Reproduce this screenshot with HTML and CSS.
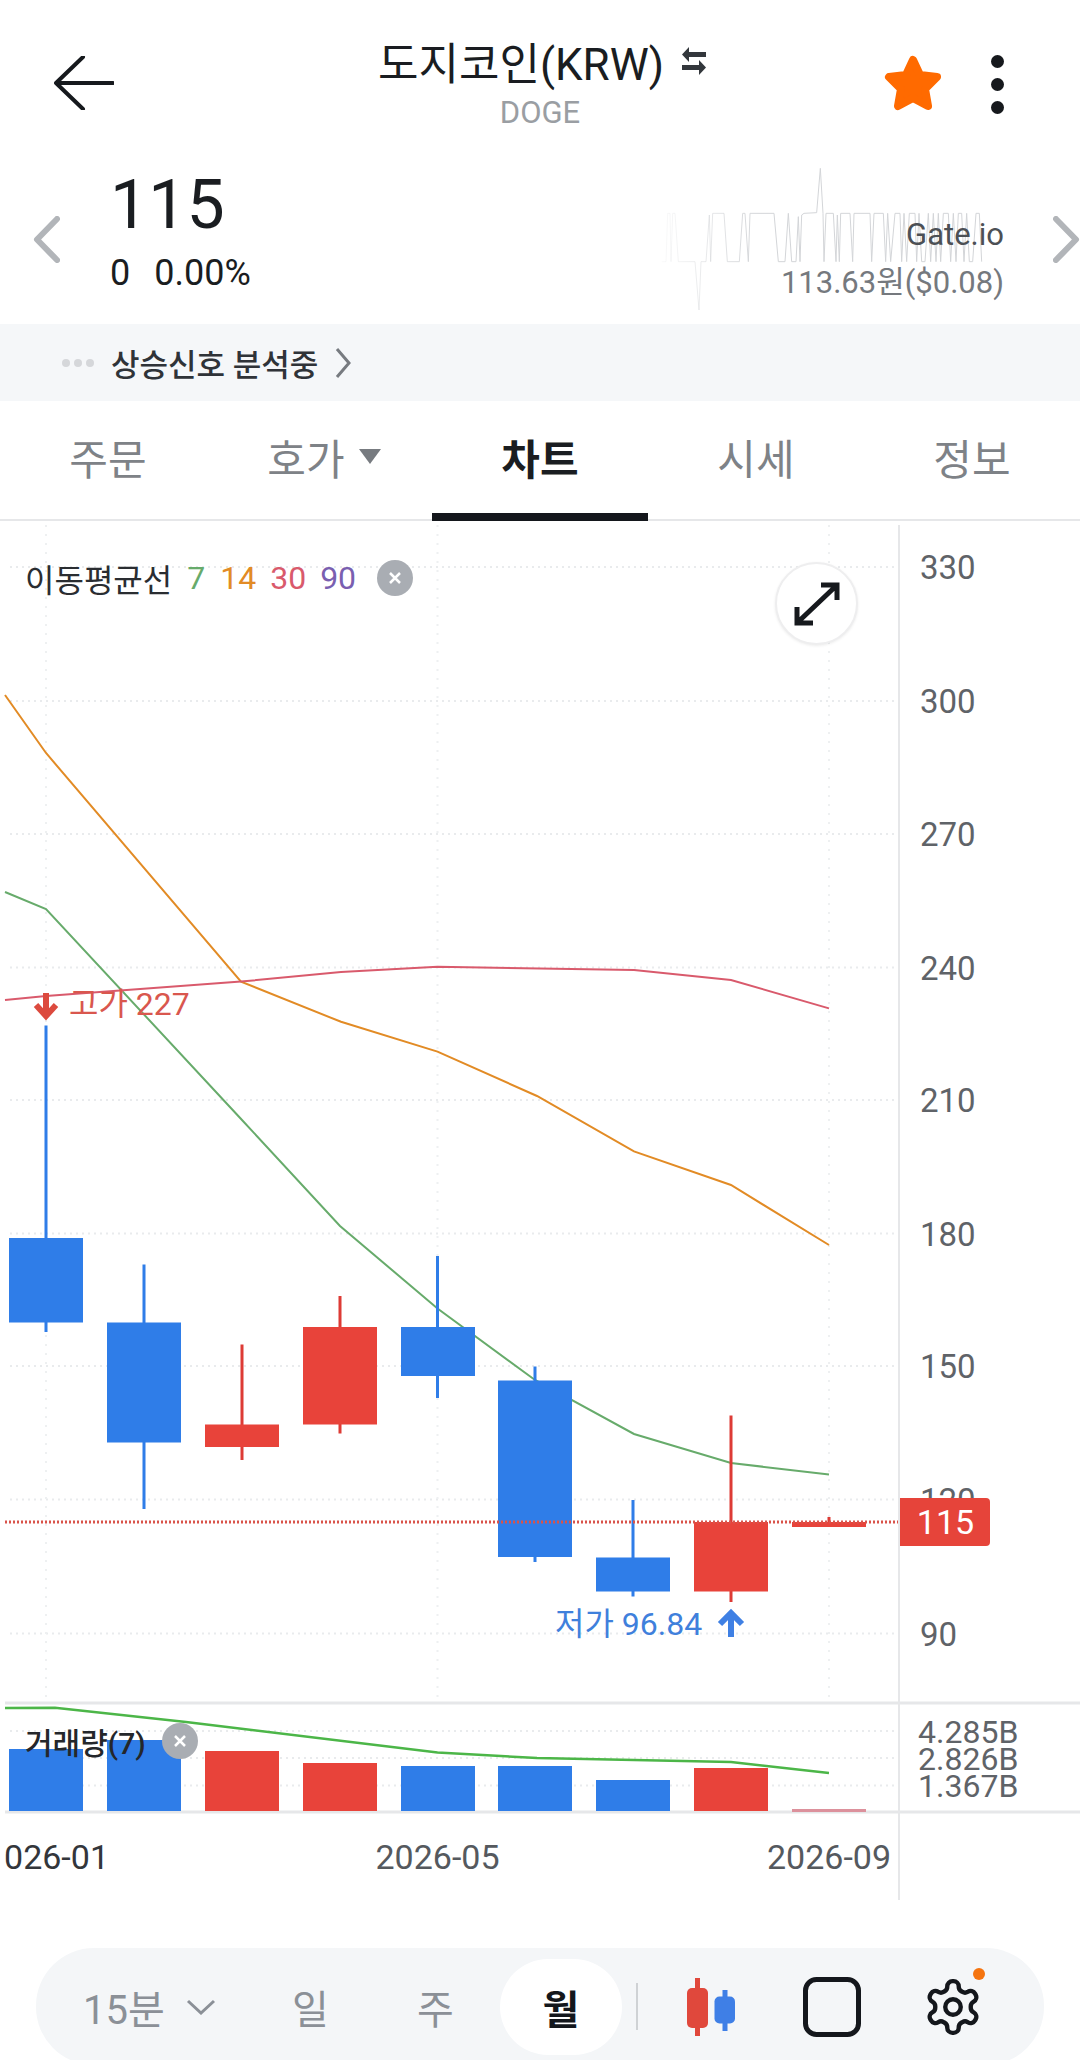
FILE: index.html
```html
<!DOCTYPE html>
<html lang="ko">
<head>
  <meta charset="UTF-8">
  <title>도지코인(KRW) 차트</title>
  <link rel="stylesheet" href="styles.css">
</head>
<body>
  <header class="header">
    <svg class="back" width="60" height="54" viewBox="0 0 60 54"><path d="M29 1 2 27l27 26M2 27h57"/></svg>
    <div class="title-box">
      <div class="title">
        <span>도지코인(KRW)</span>
        <svg class="swap" width="28" height="32" viewBox="0 0 28 32"><path d="M9 2 2 9.500 9 17V12h17V7H9zM19 15l7 7.500-7 7.500v-5H2v-5h17z"/></svg>
      </div>
      <div class="symbol">DOGE</div>
    </div>
    <svg class="star" width="60" height="56" viewBox="0 0 60 56"><path d="M30 5 37 20 54 22 42 34 45 51 30 43 15 51 18 34 6 22 23 20z"/></svg>
    <div class="kebab"><i></i><i></i><i></i></div>
  </header>

  <section class="quote">
    <svg class="spark" width="460" height="180" viewBox="0 0 1380 540">
      <defs>
        <linearGradient id="fade" gradientUnits="userSpaceOnUse" x1="120" y1="0" x2="420" y2="0">
          <stop offset="0" stop-color="#d3d5d8" stop-opacity="0.1"/>
          <stop offset="1" stop-color="#d3d5d8"/>
        </linearGradient>
      </defs>
      <polyline stroke="url(#fade)" points="125,335 138,335 143,190 150,190 153,335 158,190 165,190 175,335 225,335 237,480 243,335 258,335 268,195 272,335 278,190 312,190 322,335 358,335 368,190 375,190 385,335 390,190 462,190 475,335 495,335 505,190 515,335 528,335 535,200 540,335 545,195 552,190 590,188 601,55 609,190 612,335 618,190 640,190 648,335 652,195 658,335 662,190 690,190 698,335 702,190 750,190 755,335 762,190 790,190 797,335 803,190 812,335 825,190 840,190 845,335 852,190 860,335 868,190 885,190 890,335 897,190 905,335 915,335 925,190 932,335 940,190 948,335 955,190 962,335 970,190 985,190 992,335 1000,190 1008,335 1015,190 1025,190 1032,335 1040,190 1048,335 1058,335 1068,190 1078,190 1085,335"/>
    </svg>
    <svg class="nav-chevron" width="27" height="47" viewBox="0 0 27 47"><path d="M24 3 4 23.500 24 44"/></svg>
    <div class="price-box">
      <div class="price">115</div>
      <div class="change"><span>0</span><span>0.00%</span></div>
    </div>
    <div class="source">
      <div class="source-name">Gate.io</div>
      <div class="source-price">113.63원($0.08)</div>
    </div>
    <svg class="nav-chevron next" width="27" height="47" viewBox="0 0 27 47"><path d="M3 3 23 23.500 3 44"/></svg>
  </section>

  <div class="signal">
    <div class="signal-dots"><i></i><i></i><i></i></div>
    <span>상승신호 분석중</span>
    <svg width="16" height="30" viewBox="0 0 16 30"><path d="M2 1 14 15 2 29"/></svg>
  </div>

  <nav class="tabs">
    <a>주문</a>
    <a>호가<i class="caret"></i></a>
    <a class="active">차트</a>
    <a>시세</a>
    <a>정보</a>
  </nav>

  <main class="chart">
    <svg class="plot" width="1080" height="1379" viewBox="0 521 1080 1379">
      <!-- grid -->
      <g class="grid">
        <path d="M10 567H897M10 701H897M10 834H897M10 967.500H897M10 1100H897M10 1233.500H897M10 1366H897M10 1499.500H897M10 1633.500H897"/>
        <path d="M10 1731H897M10 1758H897M10 1785.500H897"/>
      </g>
      <path class="grid-v" d="M46 525V1700M437.500 525V1700M829 525V1700"/>

      <!-- moving averages -->
      <polyline class="ma ma7" points="5,892 46,909 242,1120 340,1226 437.500,1308.500 535,1380 634,1434 731,1463 829,1474.500"/>
      <polyline class="ma ma14" points="5,695 46,753 241,981.600 341,1021.800 437.500,1051.600 537,1096 634,1151.400 731,1185 829,1245"/>
      <polyline class="ma ma30" points="5,1000 46,996 241,981.600 341,972 437.500,966.700 634,970 731,980 829,1008.400"/>

      <!-- candles -->
      <g class="fall">
        <path class="wick" d="M46 1025.500V1332M144 1264.500V1509M437.500 1256V1398M535 1366.500V1562M633 1500V1596.500"/>
        <rect x="9" y="1238" width="74" height="84.500"/>
        <rect x="107" y="1322.500" width="74" height="120"/>
        <rect x="401" y="1327" width="74" height="49"/>
        <rect x="498" y="1380.500" width="74" height="176.500"/>
        <rect x="596" y="1557.500" width="74" height="34"/>
      </g>
      <g class="rise">
        <path class="wick" d="M242 1344.500V1460M340 1296V1433.500M731 1415.500V1602M829 1517V1527"/>
        <rect x="205" y="1424.500" width="74" height="22.500"/>
        <rect x="303" y="1327" width="74" height="97.500"/>
        <rect x="694" y="1522" width="74" height="69.500"/>
        <rect x="792" y="1522" width="74" height="5"/>
      </g>

      <path class="last-line" d="M5 1522H900"/>

      <!-- high / low markers -->
      <path class="mark-high" d="M46 993V1015M36 1005l10 11 10-11"/>
      <text class="label label-high" x="69" y="1015">고가 227</text>
      <text class="label label-low" x="555" y="1635">저가 96.84</text>
      <path class="mark-low" d="M731 1637V1613M720 1624l11-11 11 11"/>

      <!-- y axis -->
      <path class="axis" d="M899 525V1900"/>
      <g class="tick">
        <text x="920" y="579">330</text>
        <text x="920" y="713">300</text>
        <text x="920" y="846">270</text>
        <text x="920" y="979.500">240</text>
        <text x="920" y="1112">210</text>
        <text x="920" y="1245.500">180</text>
        <text x="920" y="1378">150</text>
        <text x="920" y="1511.500">120</text>
        <text x="920" y="1645.500">90</text>
      </g>
      <path class="price-tag" d="M900 1498H986a4 4 0 0 1 4 4v40a4 4 0 0 1-4 4H900z"/>
      <text class="price-tag-text" x="945.500" y="1534" text-anchor="middle">115</text>

      <!-- volume -->
      <path class="pane-line" d="M5 1703H1080M5 1812H1080"/>
      <g class="fall">
        <rect x="9" y="1749" width="74" height="62"/>
        <rect x="107" y="1740" width="74" height="71"/>
        <rect x="401" y="1766" width="74" height="45"/>
        <rect x="498" y="1766" width="74" height="45"/>
        <rect x="596" y="1780" width="74" height="31"/>
      </g>
      <g class="rise">
        <rect x="205" y="1751" width="74" height="60"/>
        <rect x="303" y="1763" width="74" height="48"/>
        <rect x="694" y="1768" width="74" height="43"/>
      </g>
      <rect class="vol-flat" x="792" y="1809" width="74" height="3"/>
      <polyline class="vol-ma" points="5,1708 55,1707.700 186,1722 437.500,1752.600 537,1758 731,1762 829,1773"/>
      <g class="tick vol-tick">
        <text x="918" y="1743">4.285B</text>
        <text x="918" y="1770">2.826B</text>
        <text x="918" y="1797">1.367B</text>
      </g>

      <!-- x axis -->
      <text class="date date-first" x="109" y="1869" text-anchor="end">026-01</text>
      <text class="date" x="437.500" y="1869" text-anchor="middle">2026-05</text>
      <text class="date" x="829" y="1869" text-anchor="middle">2026-09</text>
    </svg>

    <div class="legend">
      <span class="legend-name">이동평균선</span>
      <span class="c7">7</span>
      <span class="c14">14</span>
      <span class="c30">30</span>
      <span class="c90">90</span>
      <i class="close"><svg width="14" height="14" viewBox="0 0 14 14"><path d="M2 2 12 12M12 2 2 12"/></svg></i>
    </div>

    <button class="expand">
      <svg width="46" height="44" viewBox="0 0 46 44"><path d="M4 40 42 4M27 3H43V18M3 25V41H19"/></svg>
    </button>

    <div class="vol-legend">
      <span>거래량(7)</span>
      <i class="close"><svg width="14" height="14" viewBox="0 0 14 14"><path d="M2 2 12 12M12 2 2 12"/></svg></i>
    </div>
  </main>

  <footer class="toolbar">
    <div class="period">15분<svg width="30" height="16" viewBox="0 0 30 16"><path d="M2 2 15 14 28 2"/></svg></div>
    <a class="unit">일</a>
    <a class="unit">주</a>
    <a class="unit active">월</a>
    <div class="divider"></div>
    <svg class="tool-candle" width="48" height="58" viewBox="0 0 48 58">
      <path class="r" d="M10.500 0V58"/><rect class="rb" x="0" y="10" width="21" height="40" rx="5"/>
      <path class="b" d="M38 12V53"/><rect class="bb" x="27.500" y="18.500" width="20.500" height="27" rx="5"/>
    </svg>
    <svg class="tool-square" width="58" height="60" viewBox="0 0 58 60"><rect x="2.500" y="2.500" width="53" height="55" rx="11"/></svg>
    <div class="gear-box">
      <svg class="gear" width="62" height="66" viewBox="0 0 24 24"><path d="M12.220 2h-.44a2 2 0 0 0-2 2v.18a2 2 0 0 1-1 1.730l-.43.25a2 2 0 0 1-2 0l-.15-.08a2 2 0 0 0-2.730.73l-.22.38a2 2 0 0 0 .73 2.730l.15.1a2 2 0 0 1 1 1.720v.51a2 2 0 0 1-1 1.740l-.15.09a2 2 0 0 0-.73 2.730l.22.38a2 2 0 0 0 2.730.73l.15-.08a2 2 0 0 1 2 0l.43.25a2 2 0 0 1 1 1.730V20a2 2 0 0 0 2 2h.44a2 2 0 0 0 2-2v-.18a2 2 0 0 1 1-1.730l.43-.25a2 2 0 0 1 2 0l.15.08a2 2 0 0 0 2.730-.73l.22-.39a2 2 0 0 0-.73-2.730l-.15-.08a2 2 0 0 1-1-1.740v-.5a2 2 0 0 1 1-1.740l.15-.09a2 2 0 0 0 .73-2.730l-.22-.38a2 2 0 0 0-2.730-.73l-.15.08a2 2 0 0 1-2 0l-.43-.25a2 2 0 0 1-1-1.730V4a2 2 0 0 0-2-2z"/><circle cx="12" cy="12" r="3"/></svg>
      <i class="gear-dot"></i>
    </div>
  </footer>
</body>
</html>
```

FILE: styles.css
```css
:root {
  --ink: #1a1d21;
  --muted: #7e8287;
  --blue: #2f7de8;
  --red: #e8433a;
  --line: #e6e7e9;
}

* {
  box-sizing: border-box;
}

html, body {
  margin: 0;
  height: 2060px;
  overflow: hidden;
}

body {
  background: #fff;
  color: var(--ink);
  font-family: Roboto, "Noto Sans CJK KR", sans-serif;
}

/* header */
.header {
  display: flex;
  align-items: flex-start;
  height: 140px;
  position: relative;
}

.back {
  margin: 56px 0 0 54px;
  fill: none;
  stroke: #16191d;
  stroke-width: 4;
  stroke-linecap: round;
  stroke-linejoin: round;
}

.title-box {
  position: absolute;
  left: 0;
  right: 0;
  top: 34px;
  text-align: center;
}

.title {
  display: flex;
  justify-content: center;
  align-items: center;
  gap: 16px;
  height: 54px;
  font-size: 44px;
  margin-left: 6px;
}

.swap {
  fill: #33373c;
}

.symbol {
  margin-top: 5px;
  font-size: 31px;
  line-height: 40px;
  color: #9a9ea3;
}

.star {
  margin: 55px 0 0 769px;
  fill: #ff6a00;
  stroke: #ff6a00;
  stroke-width: 8;
  stroke-linejoin: round;
}

.kebab {
  display: flex;
  flex-direction: column;
  gap: 10px;
  margin: 55px 0 0 48px;
}

.kebab i {
  width: 13px;
  height: 13px;
  border-radius: 50%;
  background: #16191d;
}

/* price row */
.quote {
  display: flex;
  align-items: flex-start;
  height: 184px;
  position: relative;
}

.spark {
  position: absolute;
  left: 620px;
  top: 10px;
  fill: none;
  stroke-width: 3;
}

.nav-chevron {
  flex: none;
  margin: 76px 0 0 33px;
  fill: none;
  stroke: #b2b5b9;
  stroke-width: 6;
  stroke-linecap: round;
  stroke-linejoin: round;
}

.nav-chevron.next {
  margin-left: 49px;
}

.price-box {
  margin: 27px 0 0 50px;
}

.price {
  font-size: 68px;
  line-height: 76px;
}

.change {
  display: flex;
  gap: 24px;
  margin-top: 8px;
  font-size: 36px;
  line-height: 44px;
}

.source {
  position: relative;
  margin: 75px 0 0 auto;
  text-align: right;
  font-size: 31px;
  line-height: 40px;
}

.source-name {
  color: #4c5055;
}

.source-price {
  margin-top: 8px;
  color: #75797e;
}

/* signal banner */
.signal {
  display: flex;
  align-items: center;
  height: 77px;
  padding-left: 62px;
  background: #f5f7f9;
  font-size: 31px;
  font-weight: 500;
  color: #2f3338;
}

.signal-dots {
  display: flex;
  gap: 4px;
  margin-right: 17px;
}

.signal-dots i {
  width: 8px;
  height: 8px;
  border-radius: 50%;
  background: #d5d7da;
}

.signal svg {
  margin-left: 17px;
  fill: none;
  stroke: #777b80;
  stroke-width: 3;
}

/* tabs */
.tabs {
  display: flex;
  height: 120px;
  border-bottom: 2px solid var(--line);
}

.tabs a {
  display: flex;
  flex: 1;
  align-items: center;
  justify-content: center;
  gap: 14px;
  padding-bottom: 2px;
  margin-bottom: -2px;
  font-size: 42px;
  color: var(--muted);
  border-bottom: 8px solid transparent;
}

.tabs a.active {
  color: var(--ink);
  font-weight: 700;
  border-bottom-color: #14171c;
}

.caret {
  width: 0;
  height: 0;
  border-left: 11px solid transparent;
  border-right: 11px solid transparent;
  border-top: 15px solid #777b80;
}

/* chart */
.chart {
  position: relative;
  height: 1379px;
}

.plot {
  display: block;
}

.plot text {
  font-family: Roboto, "Noto Sans CJK KR", sans-serif;
}

.grid path {
  fill: none;
  stroke: #e9ebed;
  stroke-width: 2;
  stroke-dasharray: 2 4;
}

.grid-v {
  fill: none;
  stroke: #eef0f1;
  stroke-width: 2;
  stroke-dasharray: 2 7;
}

.ma {
  fill: none;
  stroke-width: 2;
}

.ma7 {
  stroke: #67ab6b;
}

.ma14 {
  stroke: #e28b25;
}

.ma30 {
  stroke: #d95a6c;
}

.fall rect {
  fill: var(--blue);
}

.rise rect {
  fill: var(--red);
}

.wick {
  fill: none;
  stroke-width: 3;
}

.fall .wick {
  stroke: var(--blue);
}

.rise .wick {
  stroke: #dd3b35;
}

.last-line {
  fill: none;
  stroke: #d9534a;
  stroke-width: 3;
  stroke-dasharray: 2 2;
}

.label {
  font-size: 32px;
}

.label-high {
  fill: #d9574e;
}

.label-low {
  fill: #3f80dc;
}

.mark-high, .mark-low {
  fill: none;
  stroke-width: 6;
}

.mark-high {
  stroke: #dc4a3e;
}

.mark-low {
  stroke: #3f80e4;
}

.axis {
  fill: none;
  stroke: var(--line);
  stroke-width: 2;
}

.tick {
  font-size: 33px;
  fill: #5f6368;
}

.vol-tick {
  font-size: 32px;
}

.price-tag {
  fill: #e6443a;
}

.price-tag-text {
  font-size: 34px;
  fill: #fff;
}

.pane-line {
  fill: none;
  stroke: var(--line);
  stroke-width: 3;
}

.vol-flat {
  fill: #dc919c;
}

.vol-ma {
  fill: none;
  stroke: #4cb648;
  stroke-width: 2.500;
}

.date {
  font-size: 34px;
  fill: #55595e;
}

.date-first {
  fill: #33363b;
}

/* overlays on the chart */
.legend {
  position: absolute;
  left: 25px;
  top: 37px;
  display: flex;
  align-items: center;
  height: 40px;
  font-size: 32px;
}

.legend-name {
  color: #2a2d31;
  margin-right: 15px;
}

.c7 {
  color: #67ab6b;
  margin-right: 15px;
}

.c14 {
  color: #e28b25;
  margin-right: 14px;
}

.c30 {
  color: #d95a6c;
  margin-right: 14px;
}

.c90 {
  color: #7a5fb0;
  margin-right: 21px;
}

.close {
  display: flex;
  align-items: center;
  justify-content: center;
  width: 36px;
  height: 36px;
  border-radius: 50%;
  background: #a9adb3;
}

.close path {
  fill: none;
  stroke: #fff;
  stroke-width: 2.500;
}

.expand {
  position: absolute;
  left: 775px;
  top: 41px;
  display: flex;
  align-items: center;
  justify-content: center;
  width: 83px;
  height: 83px;
  padding: 0;
  border: 2px solid #eeeeef;
  border-radius: 50%;
  background: #fff;
  box-shadow: 0 1px 3px rgba(0, 0, 0, 0.08);
}

.expand path {
  fill: none;
  stroke: #16191d;
  stroke-width: 5;
}

.vol-legend {
  position: absolute;
  left: 25px;
  top: 1200px;
  display: flex;
  align-items: center;
  gap: 16px;
  height: 40px;
  font-size: 30px;
  font-weight: 500;
  color: #24272b;
}

/* bottom toolbar */
.toolbar {
  display: flex;
  align-items: center;
  width: 1008px;
  height: 117px;
  margin: 48px 0 0 36px;
  padding-left: 47px;
  border-radius: 58px;
  background: #f4f6f8;
}

.period {
  display: flex;
  align-items: center;
  gap: 21px;
  width: 165px;
  font-size: 40px;
  color: #8b9097;
}

.period svg {
  fill: none;
  stroke: #8b9097;
  stroke-width: 3;
}

.unit {
  display: flex;
  align-items: center;
  justify-content: center;
  width: 125px;
  height: 96px;
  font-size: 40px;
  color: #8b9097;
}

.unit.active {
  width: 122px;
  margin-left: 2px;
  border-radius: 48px;
  background: #fff;
  color: #14171c;
  font-weight: 700;
}

.divider {
  width: 2px;
  height: 47px;
  margin: 0 49px 0 14px;
  background: #cfd2d5;
}

.tool-candle {
  margin-left: 0;
}

.tool-candle path {
  fill: none;
  stroke-width: 5;
}

.tool-candle .r {
  stroke: #e0483c;
}

.tool-candle .b {
  stroke: #3f7fe6;
}

.tool-candle .rb {
  fill: #e0483c;
}

.tool-candle .bb {
  fill: #3f7fe6;
}

.tool-square {
  margin-left: 68px;
  fill: none;
  stroke: #14171c;
  stroke-width: 5;
}

.gear-box {
  position: relative;
  margin-left: 61px;
}

.gear {
  display: block;
  fill: none;
  stroke: #14171c;
  stroke-width: 1.700;
}

.gear-dot {
  position: absolute;
  left: 51px;
  top: -6px;
  width: 12px;
  height: 12px;
  border-radius: 50%;
  background: #f5740f;
}
```
